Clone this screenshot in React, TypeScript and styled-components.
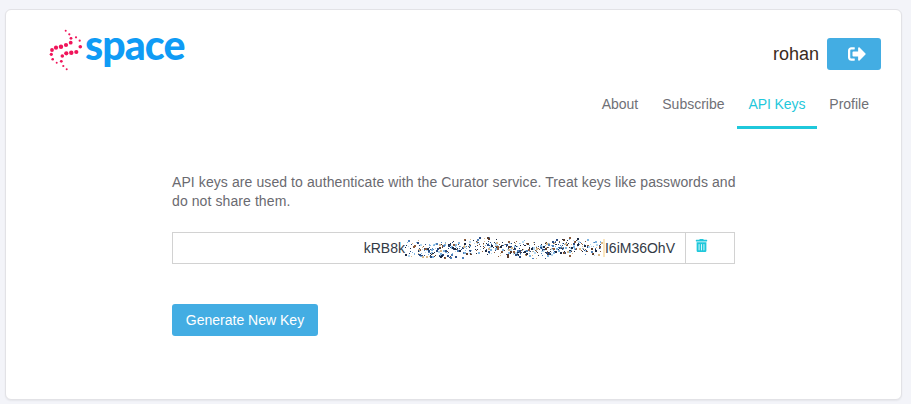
import styled, { createGlobalStyle } from "styled-components";
import { FaSignOutAlt, FaTrashAlt } from "react-icons/fa";

const GlobalStyle = createGlobalStyle`
  html, body {
    margin: 0;
    height: 100%;
    background: #f3f4f9;
    font-family: "Liberation Sans", Arial, sans-serif;
  }
`;

const Page = styled.div`
  box-sizing: border-box;
  height: 404px;
  padding: 9px 9px 4px 5px;
`;

const Card = styled.div`
  box-sizing: border-box;
  height: 100%;
  background: #fff;
  border: 1px solid #e2e2e6;
  border-radius: 6px;
  box-shadow: 0 1px 2px rgba(0, 0, 0, 0.06);
  padding: 12px 20px 0 43px;
`;

const Header = styled.header`
  display: flex;
  justify-content: space-between;
  align-items: flex-start;
`;

const LogoWrap = styled.div`
  display: flex;
  align-items: flex-start;
  height: 50px;
`;

const LogoMark = styled.svg`
  width: 36px;
  height: 50px;
  flex: none;
`;

const LogoText = styled.span`
  font-family: Lato, sans-serif;
  font-size: 41px;
  font-weight: 900;
  color: #0f9bf5;
  letter-spacing: -0.9px;
  line-height: 44px;
  margin: 1px 0 0 0;
`;

const HeaderRight = styled.div`
  display: flex;
  flex-direction: column;
  align-items: flex-end;
  padding-top: 16px;
`;

const UserRow = styled.div`
  display: flex;
  align-items: center;
  gap: 8px;
`;

const UserName = styled.span`
  font-size: 18px;
  color: #3a2a20;
`;

const LogoutButton = styled.button`
  display: flex;
  align-items: center;
  justify-content: center;
  width: 54px;
  height: 32px;
  padding: 0 0 0 5px;
  border: 0;
  border-radius: 3px;
  background: #43ade3;
  color: #fff;
`;

const Nav = styled.nav`
  display: flex;
  margin-top: 14px;
`;

const Tab = styled.a<{ $active?: boolean }>`
  box-sizing: border-box;
  height: 45px;
  padding: 12px 12px 0;
  font-size: 14px;
  line-height: 16px;
  letter-spacing: ${(p) => (p.$active ? "-0.1px" : "0")};
  color: ${(p) => (p.$active ? "#1fc8db" : "#6f7076")};
  border-bottom: 3px solid ${(p) => (p.$active ? "#1fc8db" : "transparent")};
`;

const Content = styled.main`
  width: 563px;
  margin: 44px 0 0 123px;
`;

const Intro = styled.p`
  margin: 0 -4px 0 0;
  font-size: 14px;
  line-height: 19px;
  letter-spacing: 0.09px;
  color: #6a6a70;
`;

const KeyRow = styled.div`
  display: flex;
  box-sizing: border-box;
  height: 32px;
  margin-top: 21px;
  border: 1px solid #d2d2d2;
`;

const KeyValue = styled.div`
  flex: 1;
  display: flex;
  justify-content: flex-end;
  align-items: center;
  padding-right: 10px;
  font-size: 14px;
  color: #333a45;
  border-right: 1px solid #d2d2d2;
`;

const Noise = styled.svg`
  width: 200px;
  height: 22px;
  flex: none;
`;

const DeleteCell = styled.div`
  width: 48px;
  flex: none;
  padding: 6px 0 0 9px;
  box-sizing: border-box;
  color: #1fc8db;
  font-size: 13px;
`;

const GenerateButton = styled.button`
  display: block;
  height: 32px;
  width: 146px;
  margin-top: 40px;
  border: 0;
  border-radius: 3px;
  background: #43ade3;
  color: #fff;
  font-family: inherit;
  font-size: 14px;
  padding: 0;
`;

// positions are relative to the top left of the logo mark
const dots: [number, number, number][] = [
  [16.7, 8.7, 1], [20.3, 12.3, 1.1], [27, 15.3, 1.1], [22, 16.3, 1.4],
  [30.7, 18.7, 1.1], [21.7, 20.7, 1.9], [17, 23, 2.1], [12, 24.7, 2.2],
  [7, 25.7, 2.1], [3, 28, 1.9], [2.3, 32.3, 1.6], [3.7, 37.3, 1.3],
  [7.7, 40.7, 1], [31.3, 24.7, 1.8], [27.3, 30, 2.1], [22.3, 30.7, 2.2],
  [17.3, 31.3, 2.1], [13.3, 34, 1.8], [12.3, 39.3, 1.4], [14.3, 44, 1.1],
  [17.7, 47.3, 1],
];

const noiseColors = [
  "#2a4a80", "#7fb4e0", "#1c2a44", "#8a5a3a", "#1c2a44", "#d9b98a",
  "#4d7fb8", "#7fb4e0", "#b5d8f0", "#2a4a80", "#5a3a2a",
];

let seed = 20211;
const rand = () => {
  seed = (seed * 1664525 + 1013904223) >>> 0;
  return seed / 4294967296;
};

// scrambled stretch of the key, repeatable pseudo-random specks
const specks = Array.from({ length: 640 }, () => {
  const x = rand() * 196;
  const wave = Math.sin(x / 16) * 2;
  return {
    x: Math.round(x),
    y: Math.round(11 + wave + (rand() + rand() - 1) * 10),
    size: rand() > 0.7 ? 2 : 1,
    fill: noiseColors[Math.floor(rand() * noiseColors.length)],
  };
});

const App = () => {
  return (
    <>
      <GlobalStyle />
      <Page>
        <Card>
          <Header>
            <LogoWrap>
              <LogoMark viewBox="0 0 36 50" aria-hidden="true">
                {dots.map(([cx, cy, r]) => (
                  <circle key={`${cx}-${cy}`} cx={cx} cy={cy} r={r} fill="#f0145a" />
                ))}
              </LogoMark>
              <LogoText>space</LogoText>
            </LogoWrap>
            <HeaderRight>
              <UserRow>
                <UserName>rohan</UserName>
                <LogoutButton aria-label="Log out">
                  <FaSignOutAlt size={18} />
                </LogoutButton>
              </UserRow>
              <Nav>
                <Tab>About</Tab>
                <Tab>Subscribe</Tab>
                <Tab $active>API Keys</Tab>
                <Tab>Profile</Tab>
              </Nav>
            </HeaderRight>
          </Header>
          <Content>
            <Intro>
              API keys are used to authenticate with the Curator service. Treat keys like passwords and do not share them.
            </Intro>
            <KeyRow>
              <KeyValue>
                kRB8k
                <Noise viewBox="0 0 200 22" aria-hidden="true">
                  {specks.map((s, i) => (
                    <rect key={i} x={s.x} y={s.y} width={s.size} height={s.size} fill={s.fill} />
                  ))}
                  <rect x="198" y="2" width="2" height="18" fill="#fbe6bf" />
                </Noise>
                I6iM36OhV
              </KeyValue>
              <DeleteCell>
                <FaTrashAlt />
              </DeleteCell>
            </KeyRow>
            <GenerateButton>Generate New Key</GenerateButton>
          </Content>
        </Card>
      </Page>
    </>
  );
};

export default App;
